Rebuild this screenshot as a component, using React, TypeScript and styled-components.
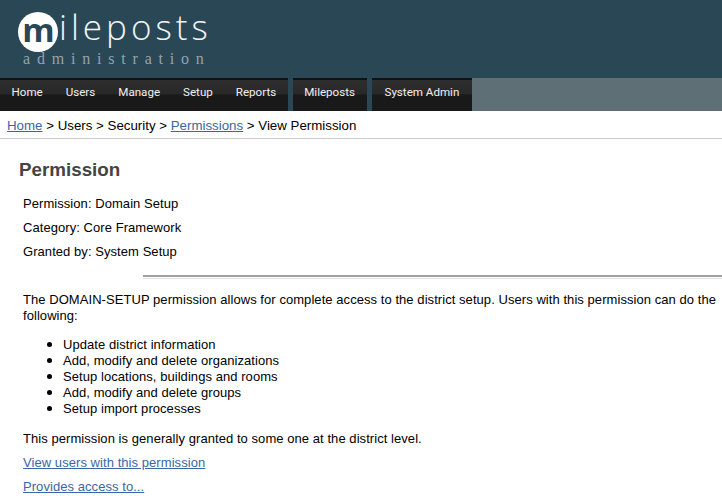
import styled, { createGlobalStyle } from 'styled-components';

const GlobalStyle = createGlobalStyle`
  html, body {
    margin: 0;
    padding: 0;
    background: #fff;
    overflow: hidden;
  }
  body {
    font-family: 'Liberation Sans', Arial, sans-serif;
    font-size: 13px;
    letter-spacing: 0.06px;
    color: #000;
  }
`;

const navGroups = [
  ['Home', 'Users', 'Manage', 'Setup', 'Reports'],
  ['Mileposts'],
  ['System Admin'],
];

const items = [
  'Update district information',
  'Add, modify and delete organizations',
  'Setup locations, buildings and rooms',
  'Add, modify and delete groups',
  'Setup import processes',
];

const App = () => {
  return (
    <>
      <GlobalStyle />
      <Header>
        <LogoRow>
          <LogoCircle>m</LogoCircle>
          <LogoName>ileposts</LogoName>
        </LogoRow>
        <LogoSub>administration</LogoSub>
      </Header>
      <NavBar>
        {navGroups.map((group) => (
          <NavGroup key={group[0]}>
            {group.map((label) => (
              <NavItem key={label}>{label}</NavItem>
            ))}
          </NavGroup>
        ))}
      </NavBar>
      <Breadcrumb>
        <a href="#home">Home</a> &gt; Users &gt; Security &gt; <a href="#permissions">Permissions</a> &gt; View
        Permission
      </Breadcrumb>
      <Content>
        <Title>Permission</Title>
        <Detail>Permission: Domain Setup</Detail>
        <Detail>Category: Core Framework</Detail>
        <Detail>Granted by: System Setup</Detail>
        <Rule />
        <Description>
          The DOMAIN-SETUP permission allows for complete access to the district setup. Users with this permission can
          do the following:
        </Description>
        <List>
          {items.map((item) => (
            <li key={item}>{item}</li>
          ))}
        </List>
        <Closing>This permission is generally granted to some one at the district level.</Closing>
        <LinkRow>
          <a href="#users">View users with this permission</a>
        </LinkRow>
        <LinkRow>
          <a href="#access">Provides access to...</a>
        </LinkRow>
      </Content>
    </>
  );
};

const Header = styled.header`
  height: 78px;
  background: #2a4756;
  padding: 12px 0 0 18px;
  box-sizing: border-box;
`;

const LogoRow = styled.div`
  display: flex;
  align-items: flex-start;
  height: 38px;
`;

const LogoCircle = styled.div`
  flex: none;
  width: 40px;
  height: 40px;
  border-radius: 50%;
  background: #fff;
  color: #2a4756;
  font-family: 'Open Sans', sans-serif;
  font-weight: 700;
  font-size: 33px;
  line-height: 35px;
  text-align: center;
  letter-spacing: 0;
  padding-left: 1px;
  box-sizing: border-box;
`;

const LogoName = styled.div`
  font-family: 'Open Sans', sans-serif;
  font-weight: 300;
  font-size: 35px;
  line-height: 30px;
  letter-spacing: 4px;
  color: #f2f5f6;
  margin-left: 1px;
`;

const LogoSub = styled.div`
  margin: 0 0 0 5px;
  font-family: 'Liberation Serif', serif;
  font-size: 16px;
  line-height: 17px;
  letter-spacing: 6.8px;
  color: #94a3aa;
`;

const NavBar = styled.nav`
  height: 33px;
  background: #5f6f76;
  display: flex;
`;

const NavGroup = styled.div`
  display: flex;
  height: 33px;
  border-top: 2px solid #111;
  box-sizing: border-box;
  background: linear-gradient(#2e2e2e 0, #282828 14px, #191919 15px, #191919 100%);
  & + & {
    margin-left: 5px;
    box-shadow: -5px 0 0 #2a4756;
  }
  &:last-child {
    padding: 0 1.5px;
  }
`;

const NavItem = styled.div`
  padding: 0 11.5px;
  color: #f0f0f0;
  font-family: Roboto, sans-serif;
  font-size: 11.6px;
  letter-spacing: 0;
  line-height: 25px;
`;

const Breadcrumb = styled.div`
  height: 27px;
  border-bottom: 1px solid #ccc;
  padding-left: 7px;
  line-height: 29px;
  font-size: 13.3px;
  letter-spacing: 0;
  & a {
    color: #3a66a7;
  }
`;

const Content = styled.main`
  padding-left: 23px;
`;

const Title = styled.h1`
  margin: 20px 0 15px -4px;
  font-size: 18.8px;
  line-height: 22px;
  font-weight: bold;
  letter-spacing: 0;
  color: #444;
`;

const Detail = styled.div`
  line-height: 16px;
  margin-bottom: 8px;
`;

const Rule = styled.div`
  margin: 15px 0 13px 120px;
  height: 1px;
  border-top: 2px solid #a0a0a0;
  border-bottom: 1px solid #e4e4e4;
`;

const Description = styled.p`
  margin: 0 0 12px;
  line-height: 16px;
`;

const List = styled.ul`
  margin: 0 0 15px;
  padding-left: 40px;
  line-height: 16px;
  & li {
    height: 16px;
  }
  & li::marker {
    font-size: 16px;
  }
`;

const Closing = styled.p`
  margin: 0 0 8px;
  line-height: 16px;
`;

const LinkRow = styled.div`
  line-height: 16px;
  margin-bottom: 8px;
  & a {
    color: #3a66a7;
  }
`;

export default App;
